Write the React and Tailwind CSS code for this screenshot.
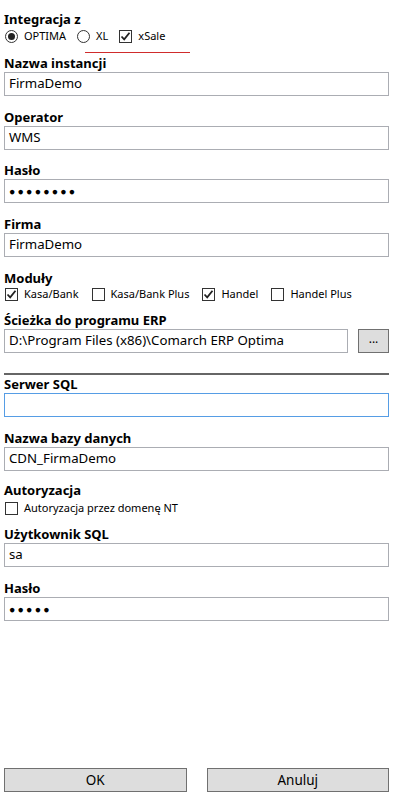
import { useState } from "react";

function Label({ children, className = "" }) {
    return (
        <div className={`font-bold text-[13px] leading-[18px] text-black ${className}`}>{children}</div>
    );
}

function TextBox({ value, focused = false, password = false, className = "" }) {
    return (
        <div
            className={`h-[24px] border bg-white flex items-center pl-[4px] text-[13.25px] text-black overflow-hidden whitespace-nowrap ${
                focused ? "border-[#569de5]" : "border-[#abadb3]"
            } ${className}`}
        >
            {password ? (
                <span className="text-[10.5px] tracking-[2.2px] leading-none">{"●".repeat(value)}</span>
            ) : (
                value
            )}
        </div>
    );
}

function CheckBox({ checked, label }) {
    return (
        <div className="flex items-center gap-[6px]">
            <div className="w-[13px] h-[13px] border border-[#333] bg-white flex items-center justify-center">
                {checked && (
                    <svg width="11" height="11" viewBox="0 0 11 11">
                        <path d="M1.5 5.5 L4.2 8.3 L9.5 1.8" fill="none" stroke="#222" strokeWidth="1.8" />
                    </svg>
                )}
            </div>
            <span className="text-[11px] leading-[14px]">{label}</span>
        </div>
    );
}

function Radio({ checked, label }) {
    return (
        <div className="flex items-center gap-[6px]">
            <div className="w-[13px] h-[13px] rounded-full border border-[#333] bg-white flex items-center justify-center">
                {checked && <div className="w-[7px] h-[7px] rounded-full bg-[#222]" />}
            </div>
            <span className="text-[11px] leading-[14px]">{label}</span>
        </div>
    );
}

function Field({ label, value, focused, password, className = "mt-[12px]" }) {
    return (
        <div className={className}>
            <Label>{label}</Label>
            <TextBox value={value} focused={focused} password={password} />
        </div>
    );
}

export default function App() {
    const [erp] = useState("OPTIMA");

    return (
        <div
            className="h-[801px] w-[397px] bg-white flex flex-col pl-[4px] pr-[8px] text-black"
            style={{ fontFamily: '"Segoe UI", "Noto Sans", sans-serif' }}
        >
            <Label className="mt-[10px]">Integracja z</Label>
            <div className="flex items-center gap-[11px] pl-[1px] h-[14px] mt-[1px]">
                <Radio checked={erp === "OPTIMA"} label="OPTIMA" />
                <Radio checked={erp === "XL"} label="XL" />
                <CheckBox checked label="xSale" />
            </div>
            <div className="ml-[81px] w-[105px] h-px bg-[#d02c2c] mt-[9px]" />

            <Field label="Nazwa instancji" value="FirmaDemo" className="mt-[1px]" />
            <Field label="Operator" value="WMS" />
            <Field label="Hasło" value={8} password className="mt-[11px]" />
            <Field label="Firma" value="FirmaDemo" />

            <Label className="mt-[12px]">Moduły</Label>
            <div className="flex items-center gap-[13px] pl-[1px] h-[14px]">
                <CheckBox checked label="Kasa/Bank" />
                <CheckBox label="Kasa/Bank Plus" />
                <CheckBox checked label="Handel" />
                <CheckBox label="Handel Plus" />
            </div>

            <div className="mt-[10px]">
                <Label>Ścieżka do programu ERP</Label>
                <div className="flex gap-[10px]">
                    <TextBox value="D:\Program Files (x86)\Comarch ERP Optima" className="flex-1" />
                    <button className="w-[31px] h-[24px] bg-[#dddddd] border border-[#707070] text-[12px] leading-none pb-[4px]">
                        ...
                    </button>
                </div>
            </div>

            <div className="mt-[20px] h-[2px] bg-[#666]" />

            <Field label="Serwer SQL" value="" focused className="mt-0" />
            <Field label="Nazwa bazy danych" value="CDN_FirmaDemo" />

            <Label className="mt-[10px]">Autoryzacja</Label>
            <div className="flex pl-[1px] mt-[2px]">
                <CheckBox label="Autoryzacja przez domenę NT" />
            </div>

            <Field label="Użytkownik SQL" value="sa" className="mt-[10px]" />
            <Field label="Hasło" value={5} password />

            <div className="mt-auto mb-[9px] flex gap-[20px]">
                <button className="flex-1 h-[24px] bg-[#dddddd] border border-[#707070] text-[13.5px]">OK</button>
                <button className="flex-1 h-[24px] bg-[#dddddd] border border-[#707070] text-[13.5px]">Anuluj</button>
            </div>
        </div>
    );
}
